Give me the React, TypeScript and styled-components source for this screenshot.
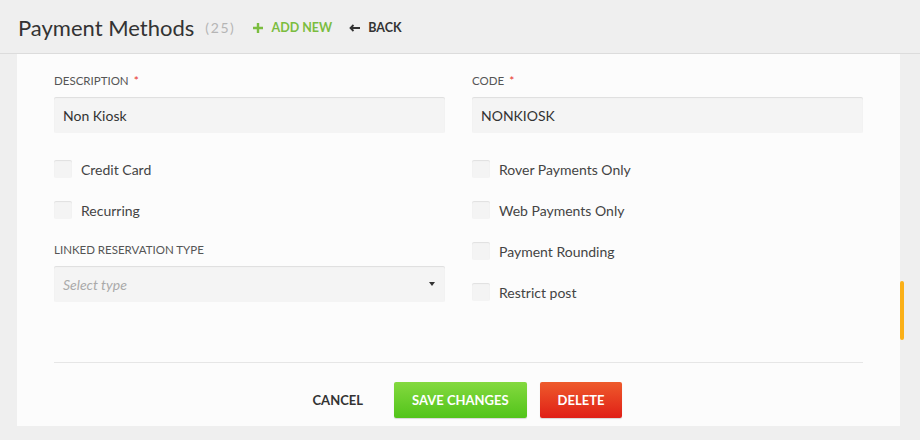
import React from 'react';
import styled, { createGlobalStyle } from 'styled-components';

const GlobalStyle = createGlobalStyle`
  html, body {
    margin: 0;
    padding: 0;
    background: #f0f0f0;
    font-family: Lato, 'Noto Sans', sans-serif;
    color: #333;
  }
`;

const Page = styled.div`
  width: 920px;
  height: 440px;
  overflow: hidden;
  background: #efefef;
`;

const Header = styled.header`
  height: 54px;
  display: flex;
  align-items: center;
  padding: 2px 0 0 18px;
  border-bottom: 1px solid #dcdcdc;
  box-sizing: border-box;
`;

const Title = styled.h1`
  margin: 0;
  font-size: 22px;
  font-weight: 400;
  color: #333;
`;

const Count = styled.span`
  margin-left: 11px;
  font-size: 14px;
  color: #b5b5b5;
  letter-spacing: 1.6px;
`;

const HeaderLink = styled.a<{ $color: string; $gap: number }>`
  display: flex;
  align-items: center;
  gap: 8px;
  margin-left: ${p => p.$gap}px;
  font-size: 12.5px;
  font-weight: 700;
  color: ${p => p.$color};
  text-transform: uppercase;
  text-decoration: none;
`;

const Body = styled.div`
  display: flex;
  height: 386px;
`;

const Panel = styled.section`
  width: 883px;
  margin-left: 17px;
  height: 372px;
  background: #fcfcfc;
  padding: 20px 37px 0 37px;
  box-sizing: border-box;
`;

const Scroll = styled.div`
  width: 20px;
  position: relative;
`;

const Thumb = styled.div`
  position: absolute;
  left: 0;
  top: 227px;
  width: 4px;
  height: 59px;
  border-radius: 2px;
  background: #fbb017;
`;

const Grid = styled.div`
  display: grid;
  grid-template-columns: 391px 391px;
  column-gap: 27px;
  height: 288px;
`;

const Column = styled.div`
  display: flex;
  flex-direction: column;
`;

const Label = styled.label`
  display: block;
  font-size: 11.5px;
  color: #555;
  text-transform: uppercase;
  height: 14px;
  line-height: 14px;
  margin-bottom: 9px;
`;

const Star = styled.span`
  color: #e8332a;
  margin-left: 5px;
  font-size: 12px;
  vertical-align: top;
`;

const Field = styled.div<{ $italic?: boolean }>`
  height: 36px;
  background: #f4f4f4;
  box-shadow: inset 0 1px 1px rgba(0, 0, 0, 0.09);
  border-radius: 2px;
  display: flex;
  align-items: center;
  justify-content: space-between;
  padding: 0 10px 0 9px;
  font-size: 14px;
  color: ${p => (p.$italic ? '#aaa' : '#333')};
  font-style: ${p => (p.$italic ? 'italic' : 'normal')};
`;

const Caret = styled.span`
  width: 0;
  height: 0;
  border-left: 3px solid transparent;
  border-right: 3px solid transparent;
  border-top: 4px solid #333;
`;

const CheckRow = styled.div<{ $first?: boolean }>`
  display: flex;
  align-items: center;
  gap: 9px;
  height: 18px;
  margin-top: ${p => (p.$first ? 27 : 23)}px;
  font-size: 14px;
  color: #444;
`;

const Box = styled.span`
  width: 18px;
  height: 18px;
  background: #f4f4f4;
  box-shadow: inset 0 1px 1px rgba(0, 0, 0, 0.08);
  border-radius: 2px;
`;

const SubLabel = styled(Label)`
  margin-top: 24px;
  margin-bottom: 9px;
`;

const Divider = styled.hr`
  margin: 0;
  border: none;
  border-top: 1px solid #e6e6e6;
`;

const Actions = styled.div`
  display: flex;
  justify-content: center;
  align-items: center;
  gap: 13px;
  padding-top: 19px;
`;

const TextButton = styled.button`
  background: none;
  border: none;
  font-family: inherit;
  font-size: 13px;
  font-weight: 700;
  color: #333;
  padding: 0 18px;
  height: 36px;
`;

const SolidButton = styled.button<{ $from: string; $to: string }>`
  height: 36px;
  padding: 0 18px;
  border: none;
  border-radius: 2px;
  font-family: inherit;
  font-size: 13px;
  font-weight: 700;
  color: #fff;
  background: linear-gradient(${p => p.$from}, ${p => p.$to});
  box-shadow: 0 1px 1px rgba(0, 0, 0, 0.15);
`;

function Check({ label, first }: { label: string; first?: boolean }) {
  return (
    <CheckRow $first={first}>
      <Box />
      {label}
    </CheckRow>
  );
}

export default function App() {
  return (
    <Page>
      <GlobalStyle />
      <Header>
        <Title>Payment Methods</Title>
        <Count>(25)</Count>
        <HeaderLink $color="#7bbd3f" $gap={18} href="#">
          <svg width="10" height="10" viewBox="0 0 10 10">
            <path d="M5 0v10M0 5h10" stroke="#7bbd3f" strokeWidth="2.4" />
          </svg>
          Add New
        </HeaderLink>
        <HeaderLink $color="#333" $gap={17} href="#">
          <svg width="11" height="8" viewBox="0 0 11 8">
            <path d="M11 4H2M4.5 1L1.5 4l3 3" stroke="#333" strokeWidth="1.8" fill="none" />
          </svg>
          Back
        </HeaderLink>
      </Header>
      <Body>
        <Panel>
          <Grid>
            <Column>
              <Label>
                Description<Star>*</Star>
              </Label>
              <Field>Non Kiosk</Field>
              <Check label="Credit Card" first />
              <Check label="Recurring" />
              <SubLabel>Linked Reservation Type</SubLabel>
              <Field $italic>
                Select type
                <Caret />
              </Field>
            </Column>
            <Column>
              <Label>
                Code<Star>*</Star>
              </Label>
              <Field>NONKIOSK</Field>
              <Check label="Rover Payments Only" first />
              <Check label="Web Payments Only" />
              <Check label="Payment Rounding" />
              <Check label="Restrict post" />
            </Column>
          </Grid>
          <Divider />
          <Actions>
            <TextButton>CANCEL</TextButton>
            <SolidButton $from="#84d93f" $to="#52c41a">SAVE CHANGES</SolidButton>
            <SolidButton $from="#ee5b2c" $to="#e01f16">DELETE</SolidButton>
          </Actions>
        </Panel>
        <Scroll>
          <Thumb />
        </Scroll>
      </Body>
    </Page>
  );
}
